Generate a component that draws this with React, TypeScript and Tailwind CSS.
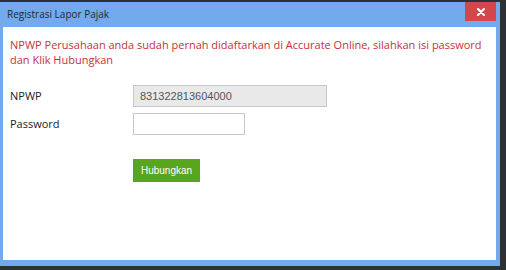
export default function App() {
  return (
    <div className="w-[506px] h-[270px] bg-[#2c3136] pt-[2px] overflow-hidden">
      <div className="w-[500px] h-[264px] bg-[#72aaed] flex flex-col">
        {/* Title bar */}
        <div className="h-[25px] flex items-start justify-between shrink-0">
          <span className="pl-[7px] pt-[6px] text-[10px] leading-[13px] text-[#1b2838] font-['Open_Sans',sans-serif]">
            Registrasi Lapor Pajak
          </span>
          <button className="mr-[4px] w-[31px] h-[19px] bg-[#d2474c] flex items-center justify-center text-white">
            <svg width="8" height="8" viewBox="0 0 8 8">
              <path d="M1 1 L7 7 M7 1 L1 7" stroke="white" strokeWidth="2" strokeLinecap="round" />
            </svg>
          </button>
        </div>

        {/* Content */}
        <div className="flex-1 ml-[3px] mr-[4px] mb-[6px] bg-white pl-[7px] pt-[10px] font-['Open_Sans',sans-serif]">
          <p className="text-[11px] leading-[15px] text-[#c8303b] pr-[10px]">
            NPWP Perusahaan anda sudah pernah didaftarkan di Accurate Online, silahkan isi password dan Klik Hubungkan
          </p>

          <div className="mt-[18px] grid grid-cols-[123px_1fr] gap-y-[6px] items-center">
            <label className="text-[11px] text-[#1a1a1a]">NPWP</label>
            <div className="w-[194px] h-[22px] bg-[#e9e9e9] border border-[#c8c8c8] pl-[6px] flex items-center text-[11px] text-[#555] font-['Liberation_Sans',Arial,sans-serif]">
              831322813604000
            </div>
            <label className="text-[11px] text-[#1a1a1a]">Password</label>
            <input
              type="password"
              className="w-[112px] h-[22px] bg-white border border-[#c8c8c8] outline-none"
            />
          </div>

          <div className="pl-[123px] mt-[21px]">
            <button className="w-[67px] h-[23px] bg-[#58a520] text-white text-[10px] font-['Liberation_Sans',Arial,sans-serif]">
              Hubungkan
            </button>
          </div>
        </div>
      </div>
    </div>
  );
}
